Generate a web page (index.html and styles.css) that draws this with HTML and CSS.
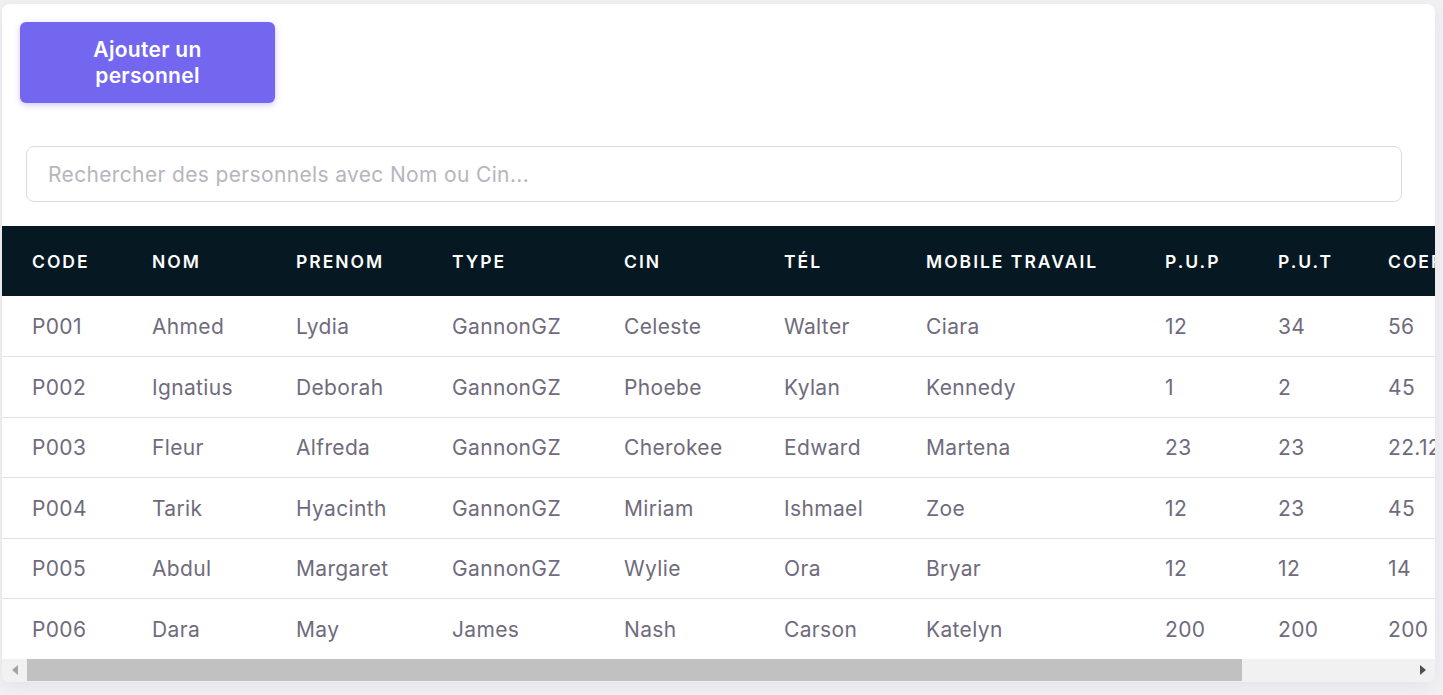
FILE: index.html
```html
<!DOCTYPE html>
<html lang="fr">
<head>
<meta charset="utf-8">
<title>Personnels</title>
<link rel="stylesheet" href="styles.css">
</head>
<body>
<div class="card">
  <div class="toolbar">
    <button class="btn-add">Ajouter un personnel</button>
  </div>
  <div class="search-wrap">
    <input class="search" type="text" placeholder="Rechercher des personnels avec Nom ou Cin...">
  </div>
  <div class="table-scroll">
    <table class="grid">
      <colgroup>
        <col class="c-code"><col class="c-nom"><col class="c-prenom"><col class="c-type"><col class="c-cin"><col class="c-tel"><col class="c-mobile"><col class="c-pup"><col class="c-put"><col class="c-coef"><col class="c-act">
      </colgroup>
      <thead>
        <tr><th>Code</th><th>Nom</th><th>Prenom</th><th>Type</th><th>Cin</th><th>Tél</th><th>Mobile Travail</th><th>P.U.P</th><th>P.U.T</th><th>Coefficient</th><th>Actions</th></tr>
      </thead>
      <tbody>
        <tr><td>P001</td><td>Ahmed</td><td>Lydia</td><td>GannonGZ</td><td>Celeste</td><td>Walter</td><td>Ciara</td><td>12</td><td>34</td><td>56</td><td></td></tr>
        <tr><td>P002</td><td>Ignatius</td><td>Deborah</td><td>GannonGZ</td><td>Phoebe</td><td>Kylan</td><td>Kennedy</td><td>1</td><td>2</td><td>45</td><td></td></tr>
        <tr><td>P003</td><td>Fleur</td><td>Alfreda</td><td>GannonGZ</td><td>Cherokee</td><td>Edward</td><td>Martena</td><td>23</td><td>23</td><td>22.12</td><td></td></tr>
        <tr><td>P004</td><td>Tarik</td><td>Hyacinth</td><td>GannonGZ</td><td>Miriam</td><td>Ishmael</td><td>Zoe</td><td>12</td><td>23</td><td>45</td><td></td></tr>
        <tr><td>P005</td><td>Abdul</td><td>Margaret</td><td>GannonGZ</td><td>Wylie</td><td>Ora</td><td>Bryar</td><td>12</td><td>12</td><td>14</td><td></td></tr>
        <tr><td>P006</td><td>Dara</td><td>May</td><td>James</td><td>Nash</td><td>Carson</td><td>Katelyn</td><td>200</td><td>200</td><td>200</td><td></td></tr>
      </tbody>
    </table>
  </div>
  <div class="hscroll" aria-hidden="true">
    <span class="hs-btn"><svg width="6" height="10" viewBox="0 0 6 10"><polygon points="6,0 6,10 0,5" fill="#a3a3a3"/></svg></span>
    <span class="hs-track"><span class="hs-thumb"></span></span>
    <span class="hs-btn"><svg width="6" height="10" viewBox="0 0 6 10"><polygon points="0,0 0,10 6,5" fill="#505050"/></svg></span>
  </div>
</div>
</body>
</html>
```

FILE: styles.css
```css
* { box-sizing: border-box; }
html, body { margin: 0; padding: 0; }
body {
  background: #f1f1f4;
  font-family: Inter, "Noto Sans", "Liberation Sans", sans-serif;
  padding: 4px 8px 0 2px;
  height: 695px;
  overflow: hidden;
}
.card {
  background: #fff;
  border-radius: 8px;
  box-shadow: 0 4px 18px rgba(75, 70, 92, 0.08);
  overflow: hidden;
  width: 1433px;
}
.toolbar {
  padding: 18px 18px 0 18px;
}
.btn-add {
  display: block;
  width: 255px;
  height: 81px;
  background: #7367f0;
  color: #fff;
  border: none;
  border-radius: 6px;
  font-family: inherit;
  font-size: 21px;
  font-weight: 600;
  letter-spacing: 0.3px;
  line-height: 26px;
  padding: 0 60px;
  box-shadow: 0 2px 6px rgba(115, 103, 240, 0.35);
  cursor: pointer;
}
.search-wrap {
  padding: 43px 33px 24px 24px;
}
.search {
  display: block;
  width: 100%;
  height: 56px;
  border: 1px solid #dbdade;
  border-radius: 8px;
  padding: 0 21px;
  font-family: inherit;
  font-size: 21px;
  letter-spacing: 0.35px;
  color: #6f6b7d;
  outline: none;
}
.search::placeholder { color: #b7b5be; }
.table-scroll {
  overflow: hidden;
}
.grid {
  border-collapse: collapse;
  table-layout: fixed;
  width: 1640px;
}
.c-code { width: 120px; }
.c-nom { width: 144px; }
.c-prenom { width: 156px; }
.c-type { width: 172px; }
.c-cin { width: 160px; }
.c-tel { width: 142px; }
.c-mobile { width: 239px; }
.c-pup { width: 113px; }
.c-put { width: 110px; }
.c-coef { width: 160px; }
.c-act { width: 124px; }
.grid th {
  background: #061821;
  color: #fff;
  height: 70px;
  text-align: left;
  padding: 0 0 0 30px;
  font-size: 17.5px;
  font-weight: 600;
  letter-spacing: 2px;
  text-transform: uppercase;
  white-space: nowrap;
  overflow: hidden;
}
.grid td {
  height: 60.5px;
  padding: 1px 0 0 30px;
  font-size: 21px;
  letter-spacing: 0.35px;
  color: #6f6b7d;
  border-bottom: 1px solid #e3e2e6;
  white-space: nowrap;
  overflow: hidden;
}
.grid tbody tr:last-child td { border-bottom: none; }
.hscroll {
  display: flex;
  height: 23px;
  background: #f1f1f1;
  padding-bottom: 1px;
}
.hs-btn {
  flex: 0 0 25px;
  display: flex;
  align-items: center;
  justify-content: center;
}
.hs-track {
  flex: 1;
  display: flex;
}
.hs-thumb {
  width: 1215px;
  background: #c1c1c1;
}
```
